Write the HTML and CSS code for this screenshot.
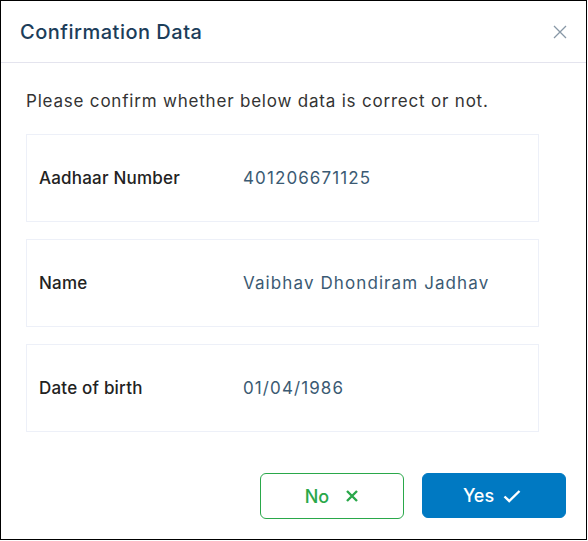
FILE: index.html
```html
<!DOCTYPE html>
<html>
<head>
<meta charset="utf-8">
<link rel="stylesheet" href="styles.css">
</head>
<body>
<div class="modal">
  <div class="modal-header">
    <h2 class="modal-title">Confirmation Data</h2>
    <button class="close-btn" aria-label="Close">
      <svg width="14" height="14" viewBox="0 0 14 14"><path d="M1 1L13 13M13 1L1 13" stroke="#8797a6" stroke-width="1.3" fill="none"/></svg>
    </button>
  </div>
  <div class="modal-body">
    <p class="intro">Please confirm whether below data is correct or not.</p>
    <div class="card">
      <span class="label">Aadhaar Number</span>
      <span class="value">401206671125</span>
    </div>
    <div class="card">
      <span class="label">Name</span>
      <span class="value">Vaibhav Dhondiram Jadhav</span>
    </div>
    <div class="card">
      <span class="label">Date of birth</span>
      <span class="value">01/04/1986</span>
    </div>
  </div>
  <div class="modal-footer">
    <button class="btn btn-no">No
      <svg width="14" height="14" viewBox="0 0 14 14"><path d="M2 2L12 12M12 2L2 12" stroke="#2aa84a" stroke-width="2.4" fill="none"/></svg>
    </button>
    <button class="btn btn-yes">Yes
      <svg width="18" height="14" viewBox="0 0 18 14"><path d="M1.5 7.5L6.2 12L16.5 2" stroke="#fff" stroke-width="2.4" fill="none"/></svg>
    </button>
  </div>
</div>
</body>
</html>
```
FILE: styles.css
```css
* { box-sizing: border-box; }
body {
  margin: 0;
  background: #fff;
  font-family: "Inter", "Noto Sans", sans-serif;
}
.modal {
  width: 587px;
  height: 540px;
  border: 1px solid #000;
  background: #fff;
  display: flex;
  flex-direction: column;
}
.modal-header {
  height: 62px;
  border-bottom: 1px solid #e4e4ee;
  display: flex;
  align-items: center;
  justify-content: space-between;
  padding: 0 19px 0 19px;
}
.modal-title {
  margin: 0;
  font-size: 20px;
  font-weight: 500;
  color: #1c3d5a;
  letter-spacing: 0.5px;
}
.close-btn {
  border: 0;
  background: none;
  padding: 0;
  width: 14px;
  height: 14px;
  display: flex;
}
.modal-body {
  padding: 0 47px 0 25px;
}
.intro {
  margin: 27px 0 22px;
  font-size: 17px;
  color: #333;
  line-height: 22px;
  letter-spacing: 0.8px;
}
.card {
  height: 88px;
  border: 1px solid #edf0f8;
  display: flex;
  align-items: center;
  padding-left: 12px;
  margin-bottom: 17px;
}
.label {
  width: 204px;
  font-size: 17px;
  font-weight: 500;
  color: #222;
  letter-spacing: 0.2px;
}
.value {
  font-size: 17px;
  color: #3b5a73;
  letter-spacing: 1.1px;
}
.modal-footer {
  display: flex;
  justify-content: flex-end;
  gap: 18px;
  padding: 24px 20px 0 0;
}
.btn {
  width: 144px;
  height: 46px;
  border-radius: 6px;
  font-family: inherit;
  font-size: 18px;
  font-weight: 500;
  display: flex;
  align-items: center;
  justify-content: center;
  gap: 16px;
}
.btn-no {
  background: #fff;
  border: 1px solid #2aa84a;
  color: #2aa84a;
}
.btn-yes {
  background: #0079c2;
  border: 1px solid #0079c2;
  color: #fff;
  gap: 9px;
  height: 45px;
  padding-left: 2px;
}
```
